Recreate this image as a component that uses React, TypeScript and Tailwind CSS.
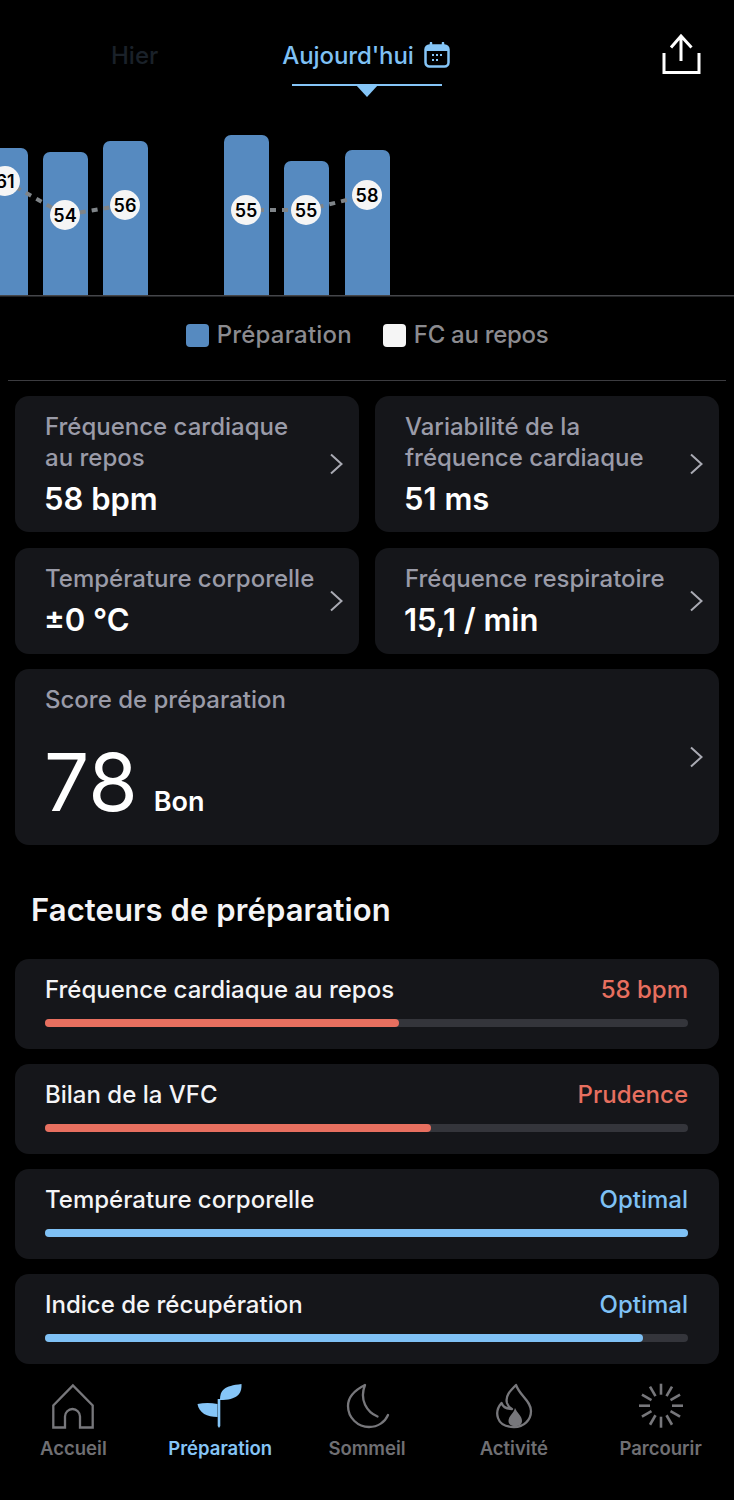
const font = { fontFamily: "Inter, sans-serif" };

function Chevron({ className }: { className?: string }) {
  return (
    <svg width="14" height="22" viewBox="0 0 14 22" fill="none" stroke="#a9aab3" strokeWidth="2" className={`shrink-0 ${className ?? ""}`}>
      <path d="M2 1.500 12.500 11 2 20.500" />
    </svg>
  );
}

function MetricCard({ label, value, className }: { label: string[]; value: string; className: string }) {
  return (
    <div className={`flex items-center justify-between rounded-[14px] bg-[#15161a] pl-[30px] pr-[16px] ${className}`}>
      <div className="pb-[1px]">
        {label.map((line) => (
          <div key={line} className="text-[24px] leading-[31px] font-medium text-[#9a9ba8] whitespace-nowrap">
            {line}
          </div>
        ))}
        <div className="mt-[8px] ml-[-1px] text-[31px] leading-[36px] font-semibold text-white whitespace-nowrap">{value}</div>
      </div>
      <Chevron />
    </div>
  );
}

function FactorRow({ label, value, pct, tone }: { label: string; value: string; pct: number; tone: "red" | "blue" }) {
  const isRed = tone === "red";
  return (
    <div className="h-[90px] rounded-[14px] bg-[#15161a] pl-[30px] pr-[31px] pt-[15px]">
      <div className="flex items-center justify-between text-[24px] leading-[32px] font-medium">
        <span className="text-[#f4f4f6]">{label}</span>
        <span className={isRed ? "text-[#e76f5f]" : "text-[#7fc1f5]"}>{value}</span>
      </div>
      <div className="mt-[13px] h-2 rounded-full bg-[#34353b]">
        <div className={`h-2 rounded-full ${isRed ? "bg-[#e76f5f]" : "bg-[#7fc1f5]"}`} style={{ width: `${pct}%` }} />
      </div>
    </div>
  );
}

function Chart() {
  const bars = [
    [-17, 148],
    [43, 152],
    [103, 141],
    [224, 135],
    [284, 161],
    [345, 150],
  ];
  const dots: [number, number, string][] = [
    [5, 181, "61"],
    [65, 215, "54"],
    [125, 205, "56"],
    [246, 210, "55"],
    [306, 210, "55"],
    [367, 195, "58"],
  ];
  return (
    <svg width="734" height="209" viewBox="0 88 734 209" className="block">
      {bars.map(([x, y]) => (
        <path key={x} d={`M${x} 295V${y + 7}a7 7 0 0 1 7-7h31a7 7 0 0 1 7 7V295Z`} fill="#568ac0" />
      ))}
      <polyline points="5,181 65,215 125,205" fill="none" stroke="#7f8488" strokeWidth="4" strokeDasharray="6 6" />
      <polyline points="246,210 306,210 367,195" fill="none" stroke="#7f8488" strokeWidth="4" strokeDasharray="6 6" />
      {dots.map(([x, y, n]) => (
        <g key={x}>
          <circle cx={x} cy={y} r="15" fill="#f5f5f5" />
          <text x={x} y={y + 6.5} textAnchor="middle" fontSize="18" fontWeight="600" fill="#000" fontFamily="Inter, sans-serif">
            {n}
          </text>
        </g>
      ))}
      <rect x="0" y="295" width="734" height="1.5" fill="#45464a" />
    </svg>
  );
}

function NavIcon({ name }: { name: string }) {
  if (name === "home") {
    return (
      <svg width="46" height="46" viewBox="0 0 46 46" fill="none" stroke="#77777b" strokeWidth="2.300">
        <path d="M3.300 44.500V22.500L22.900 2.500 42.700 22.500V44.500H30V33.500a7.500 7.500 0 0 0-15 0V44.500Z" strokeLinejoin="miter" />
      </svg>
    );
  }
  if (name === "sprout") {
    return (
      <svg width="46" height="46" viewBox="0 0 46 46" fill="#85c5f7">
        <path d="M20.700 16h2.600v27l-1.300 2-1.300-2Z" />
        <path d="M.5 21C7 19.500 14 19.500 20.500 21V34C10 34 2 30 .5 21Z" />
        <path d="M23 17C23 7 27 3 44.500 1 45 11 40 17 23 17Z" />
      </svg>
    );
  }
  if (name === "moon") {
    return (
      <svg width="46" height="46" viewBox="0 0 46 46" fill="none" stroke="#77777b" strokeWidth="2.300" strokeLinecap="round" strokeLinejoin="round">
        <path d="M33.500 33.500C23 29 15 17 21 2 9 8 4 15 4 23 4 35 14 44 25 44 34 44 41 39 44 32" />
      </svg>
    );
  }
  if (name === "flame") {
    return (
      <svg width="46" height="46" viewBox="0 0 46 46" fill="none" stroke="#77777b" strokeWidth="2.300" strokeLinejoin="round">
        <path d="M25 2C19 8 14 13 16 20 17 23 19 25 21 26 16 26 12 24 10.500 20 7 24 5 29 7 35 9 41 15 44 23 44 33 44 40 37 40 28 40 18 29 13 25 2Z" />
        <path d="M24 25C26 30 31 33 31 38 31 41 29 43 24 43 20 43 17.500 41 17.500 38 17.500 33 23 30 24 25Z" fill="#77777b" stroke="none" />
      </svg>
    );
  }
  return (
    <svg width="46" height="46" viewBox="-23 -22.700 46 46" stroke="#77777b" strokeWidth="2.600">
      {Array.from({ length: 12 }).map((_, i) => {
        const a = (i * Math.PI) / 6;
        return <line key={i} x1={Math.sin(a) * 11} y1={-Math.cos(a) * 11} x2={Math.sin(a) * 22} y2={-Math.cos(a) * 22} />;
      })}
    </svg>
  );
}

const navItems = [
  { label: "Accueil", icon: "home" },
  { label: "Préparation", icon: "sprout", active: true },
  { label: "Sommeil", icon: "moon" },
  { label: "Activité", icon: "flame" },
  { label: "Parcourir", icon: "compass" },
];

export default function App() {
  return (
    <div className="w-[734px] h-[1500px] overflow-hidden bg-black" style={font}>
      {/* 상단 날짜 탭 */}
      <header className="relative h-[88px]">
        <div className="flex pt-[41px]">
          <span className="ml-[111px] text-[24px] leading-[30px] font-medium text-[#1a2129]">Hier</span>
          <span className="ml-[124px] text-[24px] leading-[30px] font-medium text-[#7fc1f5] tracking-[-0.1px]">Aujourd'hui</span>
          <svg width="26" height="26" viewBox="0 0 26 26" className="ml-[10px] mt-[1px]" fill="none">
            <rect x="1.500" y="3.500" width="23" height="21" rx="4" stroke="#85c5f7" strokeWidth="2.500" />
            <path d="M2 9V7a4 4 0 0 1 4-4h14a4 4 0 0 1 4 4v2Z" fill="#85c5f7" />
            <path d="M7 1v4M19 1v4" stroke="#85c5f7" strokeWidth="2.500" strokeLinecap="round" />
            <path d="M8 13h2M12 13h2M16 13h2M8 18h2M12 18h2" stroke="#85c5f7" strokeWidth="2" />
          </svg>
        </div>
        <div className="absolute left-[292px] top-[84px] h-[2px] w-[150px] bg-[#85c5f7]" />
        <div className="absolute left-[356px] top-[85px] h-0 w-0 border-x-[11px] border-t-[12px] border-x-transparent border-t-[#85c5f7]" />
        <svg width="41" height="42" viewBox="0 0 41 42" className="absolute left-[661px] top-[33px]" fill="none" stroke="#fff" strokeWidth="3">
          <path d="M20 28V3M10 14.500 20 3l10.500 11.500M3 20v19.500h35V20" />
        </svg>
      </header>

      <Chart />

      {/* 범례 */}
      <div className="flex h-[83px] items-center justify-center gap-[31px] pb-[7px] text-[24px] font-medium text-[#8b8b8f]">
        <div className="flex items-center gap-2 tracking-[0.2px]">
          <span className="h-[23px] w-[23px] rounded-[4px] bg-[#568ac0]" />
          Préparation
        </div>
        <div className="flex items-center gap-2 tracking-[-0.3px]">
          <span className="h-[23px] w-[23px] rounded-[4px] bg-[#f5f5f5]" />
          FC au repos
        </div>
      </div>
      <div className="mx-2 h-px bg-[#3c3c40]" />

      <main className="px-[15px] pt-[15px]">
        <div className="grid grid-cols-2 gap-x-4 gap-y-[16px]">
          <MetricCard className="h-[136px]" label={["Fréquence cardiaque", "au repos"]} value="58 bpm" />
          <MetricCard className="h-[136px]" label={["Variabilité de la", "fréquence cardiaque"]} value="51 ms" />
          <MetricCard className="h-[106px]" label={["Température corporelle"]} value="±0 °C" />
          <MetricCard className="h-[106px]" label={["Fréquence respiratoire"]} value="15,1 / min" />
        </div>

        <div className="mt-[15px] flex h-[176px] items-center justify-between rounded-[14px] bg-[#15161a] pl-[30px] pr-[16px]">
          <div className="mt-[-7px]">
            <div className="text-[24px] leading-[31px] font-medium text-[#9a9ba8]">Score de préparation</div>
            <div className="mt-[25px] ml-[-1px] flex items-baseline gap-[16px] text-white">
              <span className="text-[80px] leading-[84px] font-normal">78</span>
              <span className="text-[27px] font-semibold">Bon</span>
            </div>
          </div>
          <Chevron />
        </div>

        <h2 className="mt-[45px] pl-4 text-[31px] leading-[40px] font-semibold text-[#f4f4f6] tracking-[0.1px]">Facteurs de préparation</h2>

        <div className="mt-[29px] flex flex-col gap-[15px]">
          <FactorRow label="Fréquence cardiaque au repos" value="58 bpm" pct={55} tone="red" />
          <FactorRow label="Bilan de la VFC" value="Prudence" pct={60} tone="red" />
          <FactorRow label="Température corporelle" value="Optimal" pct={100} tone="blue" />
          <FactorRow label="Indice de récupération" value="Optimal" pct={93} tone="blue" />
        </div>
      </main>

      {/* 하단 내비게이션 */}
      <nav className="mt-[19px] grid grid-cols-5">
        {navItems.map((item) => (
          <div key={item.label} className="flex flex-col items-center">
            <NavIcon name={item.icon} />
            <span className={`mt-[7px] text-[18.5px] leading-[24px] font-semibold ${item.active ? "text-[#85c5f7]" : "text-[#6f6f73]"}`}>
              {item.label}
            </span>
          </div>
        ))}
      </nav>
    </div>
  );
}
